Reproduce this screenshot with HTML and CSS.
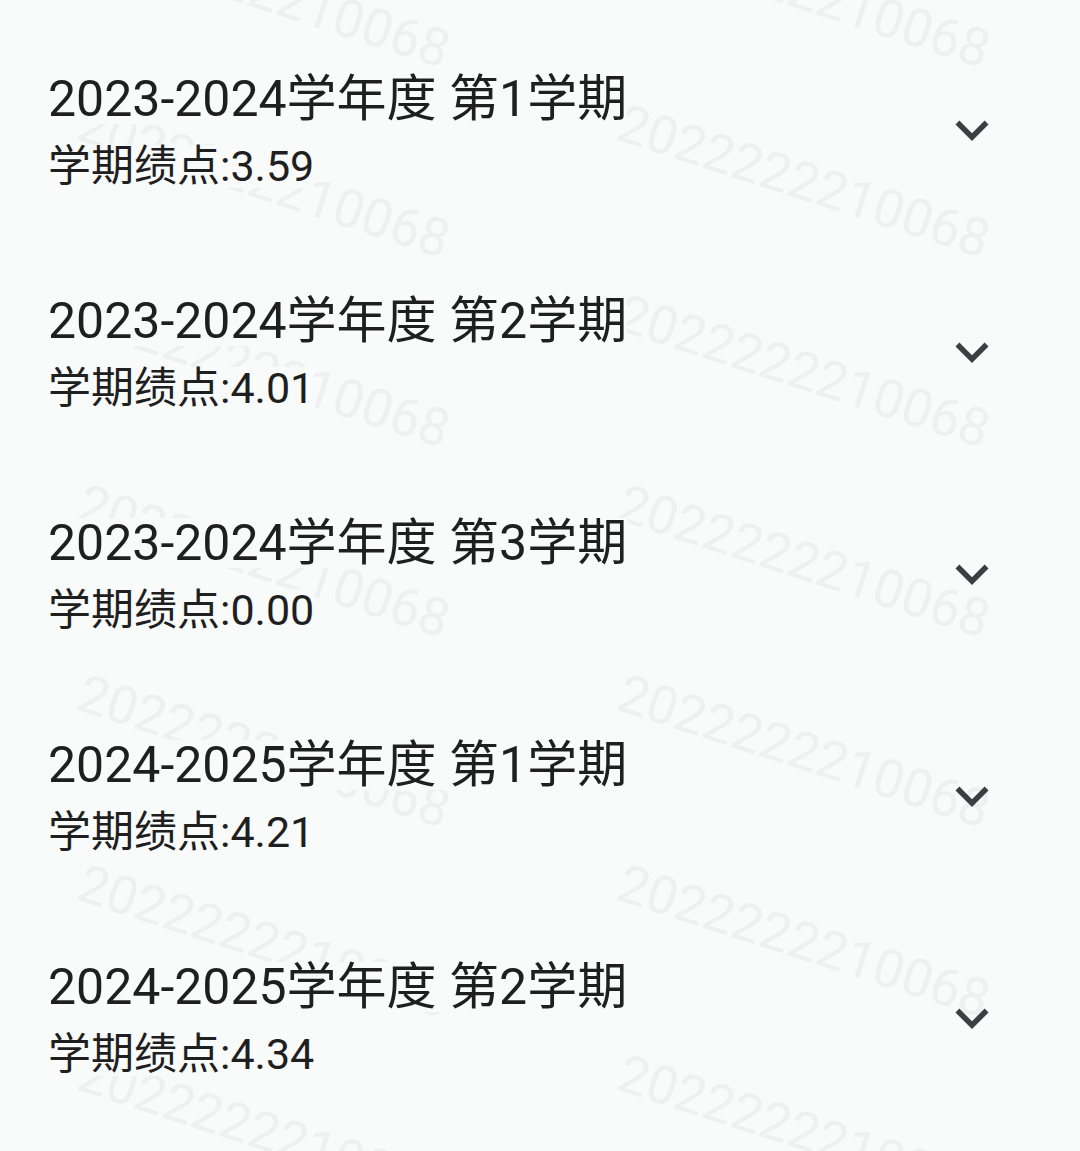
FILE: index.html
```html
<!DOCTYPE html>
<html lang="zh-CN">
<head>
<meta charset="utf-8">
<title>学期绩点</title>
<link rel="stylesheet" href="styles.css">
</head>
<body>
<div class="watermark" aria-hidden="true">
  <div class="wm-grid">
    <div class="wm-cell"><span class="wm">2022222210068</span></div>
    <div class="wm-cell"><span class="wm">2022222210068</span></div>
    <div class="wm-cell"><span class="wm">2022222210068</span></div>
    <div class="wm-cell"><span class="wm">2022222210068</span></div>
    <div class="wm-cell"><span class="wm">2022222210068</span></div>
    <div class="wm-cell"><span class="wm">2022222210068</span></div>
    <div class="wm-cell"><span class="wm">2022222210068</span></div>
    <div class="wm-cell"><span class="wm">2022222210068</span></div>
    <div class="wm-cell"><span class="wm">2022222210068</span></div>
    <div class="wm-cell"><span class="wm">2022222210068</span></div>
    <div class="wm-cell"><span class="wm">2022222210068</span></div>
    <div class="wm-cell"><span class="wm">2022222210068</span></div>
    <div class="wm-cell"><span class="wm">2022222210068</span></div>
    <div class="wm-cell"><span class="wm">2022222210068</span></div>
  </div>
</div>

<main class="list">
  <div class="item">
    <div class="texts">
      <div class="title">2023-2024学年度 第1学期</div>
      <div class="sub">学期绩点:3.59</div>
    </div>
    <svg class="chev" viewBox="0 0 24 24"><path d="M16.59 8.59L12 13.17 7.41 8.59 6 10l6 6 6-6z"/></svg>
  </div>
  <div class="item">
    <div class="texts">
      <div class="title">2023-2024学年度 第2学期</div>
      <div class="sub">学期绩点:4.01</div>
    </div>
    <svg class="chev" viewBox="0 0 24 24"><path d="M16.59 8.59L12 13.17 7.41 8.59 6 10l6 6 6-6z"/></svg>
  </div>
  <div class="item">
    <div class="texts">
      <div class="title">2023-2024学年度 第3学期</div>
      <div class="sub">学期绩点:0.00</div>
    </div>
    <svg class="chev" viewBox="0 0 24 24"><path d="M16.59 8.59L12 13.17 7.41 8.59 6 10l6 6 6-6z"/></svg>
  </div>
  <div class="item">
    <div class="texts">
      <div class="title">2024-2025学年度 第1学期</div>
      <div class="sub">学期绩点:4.21</div>
    </div>
    <svg class="chev" viewBox="0 0 24 24"><path d="M16.59 8.59L12 13.17 7.41 8.59 6 10l6 6 6-6z"/></svg>
  </div>
  <div class="item">
    <div class="texts">
      <div class="title">2024-2025学年度 第2学期</div>
      <div class="sub">学期绩点:4.34</div>
    </div>
    <svg class="chev" viewBox="0 0 24 24"><path d="M16.59 8.59L12 13.17 7.41 8.59 6 10l6 6 6-6z"/></svg>
  </div>
</main>
</body>
</html>
```

FILE: styles.css
```css
html, body {
  margin: 0;
  padding: 0;
  background: #f9fafa;
  overflow: hidden;
}

body {
  width: 1080px;
  height: 1151px;
  position: relative;
  font-family: Roboto, "Noto Sans CJK SC", sans-serif;
  color: #1f1f1f;
}

.watermark {
  position: absolute;
  inset: 0;
  overflow: hidden;
  z-index: 0;
  pointer-events: none;
}

.wm-grid {
  margin-top: -93px;
  display: grid;
  grid-template-columns: 540px 540px;
  grid-auto-rows: 190px;
}

.wm-cell {
  padding-left: 88px;
}

.wm {
  display: block;
  white-space: nowrap;
  font-family: Roboto, sans-serif;
  font-size: 53px;
  line-height: 53px;
  color: #eff0f0;
  transform: rotate(18deg);
  transform-origin: 0 0;
}

.list {
  position: relative;
  z-index: 1;
  padding-top: 20px;
  padding-left: 48px;
  padding-right: 75px;
}

.item {
  height: 222px;
  display: flex;
  align-items: center;
  justify-content: space-between;
}

.texts {
  display: flex;
  flex-direction: column;
  align-items: flex-start;
}

.title {
  font-size: 50px;
  line-height: 50px;
  background: #f9fafa;
  white-space: nowrap;
}

.sub {
  margin-top: 21px;
  font-size: 43px;
  line-height: 43px;
  background: #f9fafa;
  white-space: nowrap;
}

.chev {
  width: 66px;
  height: 66px;
  margin-top: -2px;
  fill: #3c3f40;
  flex: none;
}
```
